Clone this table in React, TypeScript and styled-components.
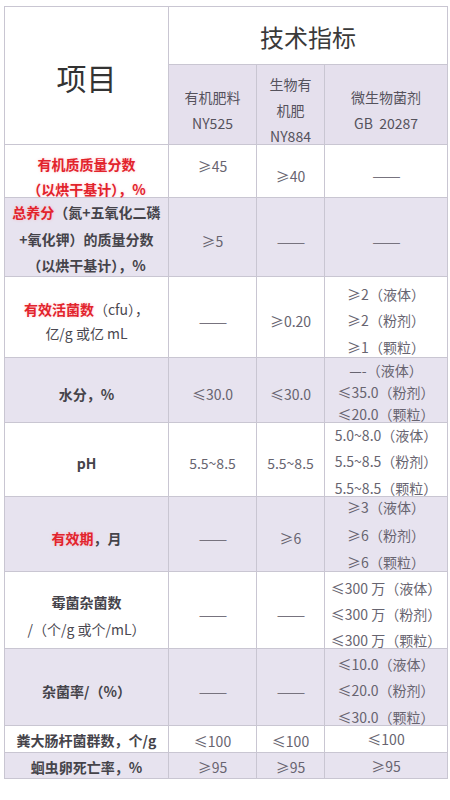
import React from "react"
import styled, { createGlobalStyle } from "styled-components"

const GlobalStyle = createGlobalStyle`
    body{
        margin: 0;
        background: #ffffff;
        font-family: "Noto Sans CJK SC", "Noto Sans", sans-serif;
    }
`

const LINE = "#c9c6d2"
const SHADE = "#e7e3ef"

const Grid = styled.div`
    display: grid;
    grid-template-columns: 164px 88px 68px 123px;
    grid-template-rows: 58px 80px 53px 79px 81px 65px 74px 75px 77px 77px 27px 26px;
    width: max-content;
    margin: 6px 0 0 4px;
    border-top: 1px solid ${LINE};
    border-left: 1px solid ${LINE};
`

const Cell = styled.div<{ $shade?: boolean; $pt?: number; $lh?: number; $top?: boolean }>`
    box-sizing: border-box;
    display: flex;
    flex-direction: column;
    align-items: center;
    justify-content: ${p => (p.$top ? "flex-start" : "center")};
    padding-top: ${p => p.$pt ?? 7}px;
    border-right: 1px solid ${LINE};
    border-bottom: 1px solid ${LINE};
    background: ${p => (p.$shade ? SHADE : "#ffffff")};
    font-size: 14px;
    line-height: ${p => p.$lh ?? 24}px;
    color: #676470;
    text-align: center;
    white-space: nowrap;
    overflow: visible;
`

const Text = styled.div`
    display: block;
`

const ItemHead = styled(Cell)`
    grid-row: span 2;
    font-size: 30px;
    line-height: 40px;
    color: #333333;
    padding-top: 3px;
`

const SpecHead = styled(Cell)`
    grid-column: span 3;
    font-size: 24px;
    line-height: 32px;
    color: #3a3a3a;
    padding-top: 3px;
`

const SubHead = styled(Cell)`
    background: #e5e0ed;
    color: #55525c;
    padding-top: 10px;
`

const Label = styled(Cell)`
    font-weight: 700;
    color: #45434a;
`

const Red = styled.span`
    color: #e2232c;
    font-weight: 700;
    text-shadow: 0 0 3px rgba(255, 140, 150, 0.45);
`

const Plain = styled.span`
    font-weight: 400;
    color: #4a4850;
`

const Dash = styled.span`
    font-size: 17px;
    letter-spacing: -1px;
    color: #77737e;
`

type Value = string | string[]

interface IRow {
    shade: boolean;
    label: React.ReactNode;
    labelLh?: number;
    labelPt?: number;
    a: Value;
    aTop?: boolean;
    aPt?: number;
    b: Value;
    bPt?: number;
    c: Value;
    cLh?: number;
    cPt?: number;
}

const DASH = "——"

const rows: IRow[] = [
    {
        shade: false,
        label: <Red>有机质质量分数<br />（以烘干基计），%</Red>,
        labelLh: 25,
        labelPt: 12,
        a: "≥45", aTop: true, aPt: 9,
        b: "≥40", bPt: 9,
        c: DASH, cPt: 7,
    },
    {
        shade: true,
        label: <><Red>总养分</Red>（氮+五氧化二磷<br />+氧化钾）的质量分数<br />（以烘干基计），%</>,
        labelLh: 26.5,
        labelPt: 4,
        a: "≥5", b: DASH, c: DASH,
    },
    {
        shade: false,
        label: <><Red>有效活菌数</Red><Plain>（cfu），</Plain><br /><Plain>亿/g 或亿 mL</Plain></>,
        a: DASH, b: "≥0.20",
        c: ["≥2（液体）", "≥2（粉剂）", "≥1（颗粒）"], cLh: 26.5,
    },
    {
        shade: true,
        label: "水分，%",
        a: "≤30.0", b: "≤30.0",
        c: ["—-（液体）", "≤35.0（粉剂）", "≤20.0（颗粒）"], cLh: 22, cPt: 4,
    },
    {
        shade: false,
        label: "pH",
        a: "5.5~8.5", b: "5.5~8.5",
        c: ["5.0~8.0（液体）", "5.5~8.5（粉剂）", "5.5~8.5（颗粒）"], cLh: 26.5, cPt: 4,
    },
    {
        shade: true,
        label: <><Red>有效期</Red>，月</>,
        a: DASH, b: "≥6",
        c: ["≥3（液体）", "≥6（粉剂）", "≥6（颗粒）"], cLh: 27.5, cPt: 3,
    },
    {
        shade: false,
        label: <>霉菌杂菌数<br /><Plain>/（个/g 或个/mL）</Plain></>,
        labelLh: 27,
        labelPt: 11,
        a: DASH, b: DASH,
        c: ["≤300 万（液体）", "≤300 万（粉剂）", "≤300 万（颗粒）"], cLh: 26,
    },
    {
        shade: true,
        label: "杂菌率/（%）",
        a: DASH, b: DASH,
        c: ["≤10.0（液体）", "≤20.0（粉剂）", "≤30.0（颗粒）"], cLh: 26.5,
    },
    {
        shade: false,
        label: "粪大肠杆菌群数，个/g",
        labelPt: 2,
        a: "≤100", aPt: 3, b: "≤100", bPt: 3, c: "≤100", cPt: 0,
    },
    {
        shade: true,
        label: "蛔虫卵死亡率，%",
        labelPt: 2,
        a: "≥95", aPt: 3, b: "≥95", bPt: 3, c: "≥95", cPt: 0,
    },
]

const renderValue = (v: Value) => {
    const lines = Array.isArray(v) ? v : [v]
    return lines.map((line, i) =>
        line === DASH ? <Dash key={i}>{line}</Dash> : <span key={i}>{line}</span>
    )
}

export default function App() {
    return (
        <>
            <GlobalStyle />
            <Grid>
                <ItemHead>项目</ItemHead>
                <SpecHead>技术指标</SpecHead>
                <SubHead $lh={26}><Text>有机肥料<br />NY525</Text></SubHead>
                <SubHead $lh={26} $pt={6}><Text>生物有<br />机肥<br />NY884</Text></SubHead>
                <SubHead $lh={26}><Text>微生物菌剂<br />GB&nbsp;&nbsp;20287</Text></SubHead>

                {rows.map((r, i) => (
                    <React.Fragment key={i}>
                        <Label $shade={r.shade} $lh={r.labelLh} $pt={r.labelPt}>
                            <Text>{r.label}</Text>
                        </Label>
                        <Cell $shade={r.shade} $top={r.aTop} $pt={r.aPt}>{renderValue(r.a)}</Cell>
                        <Cell $shade={r.shade} $pt={r.bPt}>{renderValue(r.b)}</Cell>
                        <Cell $shade={r.shade} $lh={r.cLh} $pt={r.cPt}>{renderValue(r.c)}</Cell>
                    </React.Fragment>
                ))}
            </Grid>
        </>
    )
}
